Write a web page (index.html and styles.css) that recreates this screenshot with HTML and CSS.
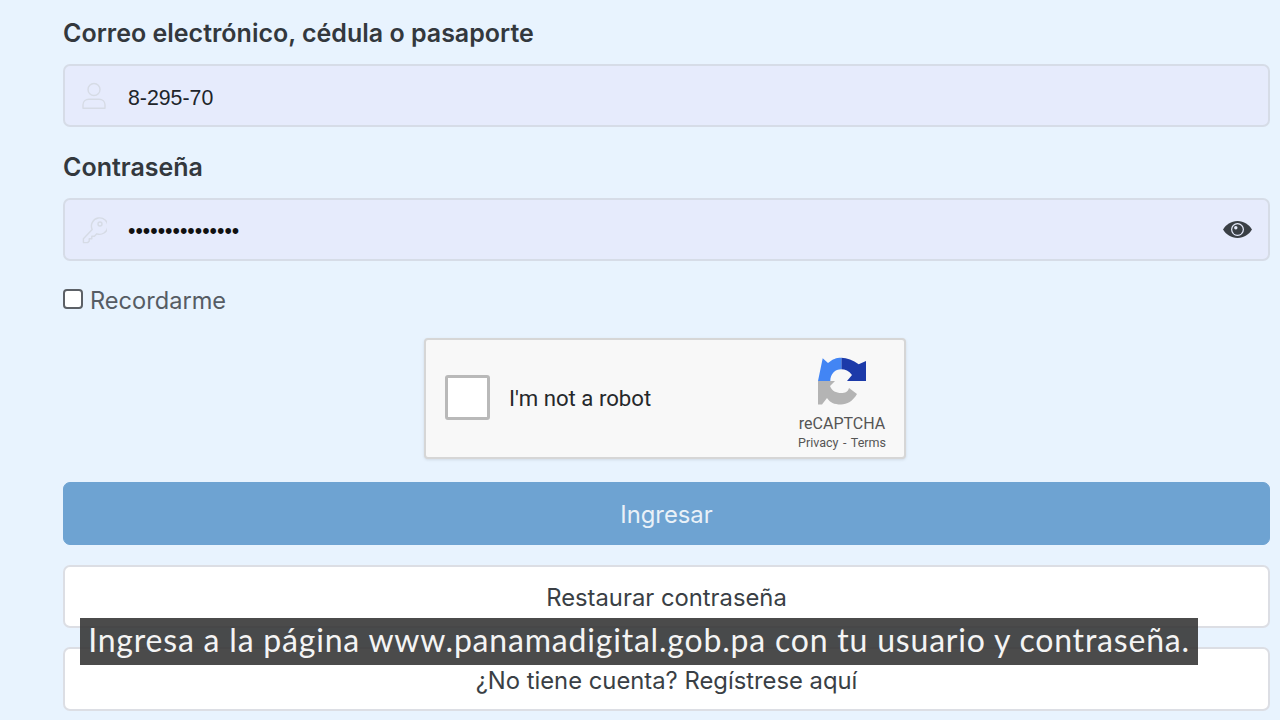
FILE: index.html
```html
<!DOCTYPE html>
<html lang="es">
<head>
<meta charset="utf-8">
<title>Panamá Digital</title>
<link rel="stylesheet" href="styles.css">
</head>
<body>
<main class="form">
  <label class="label label-first">Correo electrónico, cédula o pasaporte</label>
  <div class="field">
    <svg class="field-icon" viewBox="0 0 26 28" width="26" height="28" fill="none" stroke="#d6dbe5" stroke-width="1.4">
      <circle cx="13" cy="7.5" r="6"/>
      <path d="M2 26.2v-3.4c0-3.4 2.6-5.600 6-5.600h10c3.400 0 6 2.200 6 5.600v3.400z" stroke-linejoin="round"/>
    </svg>
    <span class="field-text">8-295-70</span>
  </div>
  <label class="label label-second">Contraseña</label>
  <div class="field">
    <svg class="field-icon" viewBox="0 0 26 28" width="26" height="28" fill="none" stroke="#d6dbe5" stroke-width="1.4" stroke-linejoin="round">
      <path d="M11.200 13.600a8.200 8.200 0 1 1 4.600 4.200l-2.400 2.400h-2.600v2.600H8.200v2.400l-1.600 1.400H2.400v-3.800z"/>
      <circle cx="19" cy="8" r="2"/>
    </svg>
    <span class="field-dots">•••••••••••••••</span>
    <svg class="eye" viewBox="0 0 29 17" width="29" height="17">
      <path fill="#3a3f45" d="M14.500 0C8 0 3 3.600 0 8.500 3 13.400 8 17 14.500 17S26 13.400 29 8.500C26 3.600 21 0 14.500 0z"/>
      <circle cx="14.500" cy="8.500" r="6.500" fill="#e6ebfc"/>
      <circle cx="14.500" cy="8.500" r="5.200" fill="#3a3f45"/>
      <circle cx="12.800" cy="6.800" r="1.700" fill="#e6ebfc"/>
    </svg>
  </div>
  <div class="remember">
    <span class="box"></span>
    <span class="remember-text">Recordarme</span>
  </div>
  <div class="captcha-row">
    <div class="captcha">
      <span class="captcha-box"></span>
      <span class="captcha-text">I'm not a robot</span>
      <div class="captcha-brand">
        <svg class="captcha-logo" viewBox="0 0 48 49" width="48" height="49">
          <path fill="#1c3aa9" d="M23.300.7C29 .7 35 3 40.700 7.300L48 4v20H29l5-6c-3-4-7-5.700-10.700-5.700z"/>
          <path fill="#4285f4" d="M23.300.7C18 .7 15 2 10 6L4.700 1.300 0 24h12.300c0-7 4.700-11.700 11-11.700z"/>
          <path fill="#b4b4b4" d="M0 24h17l-5 5c2 5 6 7 11.300 7 3.700 0 6.700-1 7.700-5l8 6c-4 7-10 10.500-16 10.500-7 0-11-2-14-6.500L4 47.500H0z"/>
        </svg>
        <span class="captcha-name">reCAPTCHA</span>
        <span class="captcha-links">Privacy - Terms</span>
      </div>
    </div>
  </div>
  <button class="btn btn-primary">Ingresar</button>
  <button class="btn btn-light btn-restore">Restaurar contraseña</button>
  <button class="btn btn-light btn-register">¿No tiene cuenta? Regístrese aquí</button>
</main>
<div class="caption">Ingresa a la página www.panamadigital.gob.pa con tu usuario y contraseña.</div>
</body>
</html>
```
FILE: styles.css
```css
* { box-sizing: border-box; }
html, body { margin: 0; height: 720px; overflow: hidden; }
body {
  background: #e8f3fe;
  font-family: Inter, "Liberation Sans", sans-serif;
  position: relative;
}
.form {
  display: flex;
  flex-direction: column;
  padding: 0 10px 0 63px;
}
.label {
  display: block;
  font-size: 25px;
  line-height: 30px;
  font-weight: 600;
  color: #33383d;
}
.label-first { margin-top: 18px; margin-bottom: 16px; }
.label-second { margin-top: 25px; margin-bottom: 16px; }
.field {
  height: 63px;
  background: #e6ebfc;
  border: 2px solid #d6dce7;
  border-radius: 7px;
  display: flex;
  align-items: center;
  padding: 0 16px 0 16px;
}
.field-icon { flex: none; }
.field-text {
  margin-left: 21px;
  margin-top: 5px;
  font-family: "Liberation Sans", Arial, sans-serif;
  font-size: 21.300px;
  color: #20242a;
}
.field-dots {
  margin-left: 21px;
  margin-top: 2px;
  font-family: "Liberation Sans", Arial, sans-serif;
  font-size: 21.200px;
  color: #111;
  flex: 1;
}
.eye { flex: none; margin-left: auto; }
.remember {
  display: flex;
  align-items: center;
  margin-top: 24px;
  height: 30px;
}
.box {
  width: 20px;
  height: 20px;
  background: #fff;
  border: 2px solid #5c6066;
  border-radius: 4px;
  margin-right: 7px;
  position: relative;
  top: -1px;
}
.remember-text { font-size: 23.600px; color: #565c64; }
.captcha-row {
  display: flex;
  justify-content: center;
  margin-top: 23px;
  padding-right: 3px;
}
.captcha {
  width: 482px;
  height: 121px;
  background: #f8f8f8;
  border: 2px solid #d6d6d6;
  border-radius: 4px;
  box-shadow: 0 1px 3px rgba(0,0,0,.1);
  display: flex;
  align-items: center;
  padding: 0 16px 0 19px;
}
.captcha-box {
  width: 45px;
  height: 45px;
  margin-bottom: 2px;
  background: #fff;
  border: 3px solid #b9b9b9;
  border-radius: 3px;
  flex: none;
}
.captcha-text {
  margin-left: 19px;
  font-family: Roboto, sans-serif;
  font-size: 22.200px;
  color: #26282b;
  position: relative;
  top: -1px;
}
.captcha-brand {
  margin-left: auto;
  display: flex;
  flex-direction: column;
  align-items: center;
  width: 92px;
  position: relative;
  top: 5px;
}
.captcha-logo { display: block; margin-bottom: 8px; }
.captcha-name {
  font-family: Roboto, sans-serif;
  font-size: 16px;
  line-height: 20px;
  color: #555;
}
.captcha-links {
  font-family: Roboto, sans-serif;
  font-size: 12.500px;
  line-height: 17px;
  word-spacing: 1.500px;
  color: #555;
}
.btn {
  display: block;
  width: 100%;
  height: 63px;
  border-radius: 7px;
  font-family: Inter, sans-serif;
  font-size: 23.800px;
  text-align: center;
  padding: 2px 0 0;
}
.btn-primary {
  margin-top: 23px;
  background: #6ea3d2;
  border: 1px solid #6ea3d2;
  color: #e9f1f8;
}
.btn-light {
  background: #fff;
  border: 2px solid #dcdee4;
  color: #3a3f45;
}
.btn-restore { margin-top: 20px; }
.btn-register { margin-top: 19px; height: 64px; }
.caption {
  position: absolute;
  left: 80px;
  top: 618px;
  width: 1118px;
  height: 47px;
  background: rgba(48, 48, 48, .87);
  color: #f4f4f4;
  font-family: Lato, sans-serif;
  font-size: 32px;
  letter-spacing: .8px;
  line-height: 43px;
  text-align: center;
  white-space: nowrap;
}
```
